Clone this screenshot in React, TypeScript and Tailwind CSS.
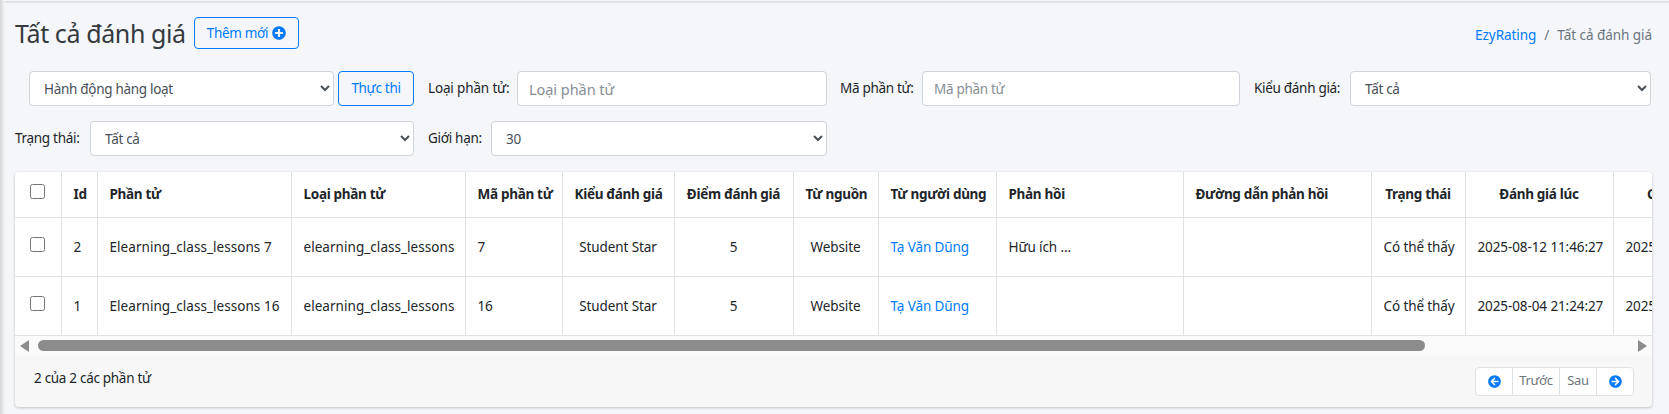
import React from "react";
import { FaPlusCircle, FaArrowCircleLeft, FaArrowCircleRight } from "react-icons/fa";

const cols = [
  { w: "w-[46px]", label: "" },
  { w: "w-[36px]", label: "Id" },
  { w: "w-[194px]", label: "Phần tử" },
  { w: "w-[174px]", label: "Loại phần tử" },
  { w: "w-[97px]", label: "Mã phần tử" },
  { w: "w-[112px]", label: "Kiểu đánh giá", c: true },
  { w: "w-[119px]", label: "Điểm đánh giá", c: true },
  { w: "w-[85px]", label: "Từ nguồn", c: true },
  { w: "w-[118px]", label: "Từ người dùng" },
  { w: "w-[187px]", label: "Phản hồi" },
  { w: "w-[188px]", label: "Đường dẫn phản hồi" },
  { w: "w-[94px]", label: "Trạng thái", c: true },
  { w: "w-[148px]", label: "Đánh giá lúc", c: true },
  { w: "w-[148px]", label: "Cập nhật lúc", c: true },
];

const rows = [
  ["2", "Elearning_class_lessons 7", "elearning_class_lessons", "7", "Student Star", "5", "Website", "Tạ Văn Dũng", "Hữu ích ...", "", "Có thể thấy", "2025-08-12 11:46:27", "2025-08-12 11:46:27"],
  ["1", "Elearning_class_lessons 16", "elearning_class_lessons", "16", "Student Star", "5", "Website", "Tạ Văn Dũng", "", "", "Có thể thấy", "2025-08-04 21:24:27", "2025-08-04 21:24:27"],
];

const field = "h-[35px] rounded-[4px] border border-[#ced4da] bg-white text-[13.5px] text-[#495057]";

export default function App() {
  return (
    <div className="relative h-[414px] w-[1669px] overflow-hidden bg-[#f4f6f9] font-['Noto_Sans',sans-serif] text-[13.5px] tracking-[-0.3px] text-[#212529]">
      <div className="h-[3px] border-b-2 border-[#dee2e6]" />
      <div className="absolute inset-y-0 left-0 w-[5px] bg-gradient-to-r from-[#d4d4d6] to-[#f4f6f9]" />
      <div className="pl-[15px] pr-[17px]">
        <div className="flex h-[68px] items-start justify-between pt-[14px]">
          <div className="flex items-center gap-[8px]">
            <h1 className="text-[25px] leading-[32px] tracking-[-0.4px] text-[#343a40]">Tất cả đánh giá</h1>
            <button className="flex h-[32px] items-center gap-[4px] rounded-[4px] border border-[#007bff] px-[12px] text-[13.5px] text-[#007bff]">
              Thêm mới <FaPlusCircle className="h-[14px] w-[14px]" />
            </button>
          </div>
          <div className="flex items-center gap-[8px] pt-[8px] pr-0 text-[13.5px] tracking-[-0.05px]">
            <span className="text-[#007bff]">EzyRating</span>
            <span className="text-[#6c757d]">/</span>
            <span className="text-[#6c757d]">Tất cả đánh giá</span>
          </div>
        </div>

        <div className="flex h-[35px] items-center pl-[14px]">
          <select className={`${field} w-[305px] pl-[10px]`} defaultValue="a">
            <option value="a">Hành động hàng loạt</option>
          </select>
          <button className="ml-[4px] h-[35px] w-[76px] rounded-[4px] border border-[#007bff] text-[#007bff]">Thực thi</button>
          <label className="ml-[14px] w-[89px] whitespace-nowrap tracking-[-0.15px]">Loại phần tử:</label>
          <input className="h-[35px] w-[310px] rounded-[4px] border border-[#ced4da] bg-white pl-[11px] pr-[12px] text-[14.5px] tracking-[-0.05px] text-[#495057] placeholder:text-[#868e96]" placeholder="Loại phần tử" />
          <label className="ml-[13px] w-[82px] whitespace-nowrap">Mã phần tử:</label>
          <input className={`${field} w-[318px] pl-[11px] pr-[12px] placeholder:text-[#868e96]`} placeholder="Mã phần tử" />
          <label className="ml-[14px] w-[96px] whitespace-nowrap">Kiểu đánh giá:</label>
          <select className={`${field} w-[301px] pl-[10px]`}>
            <option>Tất cả</option>
          </select>
        </div>

        <div className="mt-[15px] flex h-[35px] items-center">
          <label className="w-[75px] whitespace-nowrap">Trạng thái:</label>
          <select className={`${field} w-[324px] pl-[10px]`}>
            <option>Tất cả</option>
          </select>
          <label className="ml-[14px] w-[63px] whitespace-nowrap">Giới hạn:</label>
          <select className={`${field} w-[336px] pl-[10px]`}>
            <option>30</option>
          </select>
        </div>

        <div className="mt-[16px] h-[235px] overflow-hidden rounded-[4px] bg-[#f7f7f7] shadow-[0_0_1px_rgba(0,0,0,0.13),0_1px_3px_rgba(0,0,0,0.2)]">
          <div className="overflow-hidden bg-white">
            <table className="w-[1746px] table-fixed border-collapse">
              <colgroup>
                {cols.map((c, i) => (
                  <col key={i} className={c.w} />
                ))}
              </colgroup>
              <thead>
                <tr className="h-[45px] border-b border-[#dee2e6]">
                  <th className="border-r border-[#dee2e6] pb-[7px] text-center align-middle">
                    <input type="checkbox" className="h-[15px] w-[15px] align-middle" />
                  </th>
                  {cols.slice(1).map((c, i) => (
                    <th key={i} className={`whitespace-nowrap border-r border-[#dee2e6] px-[12px] font-bold ${c.c ? "text-center" : "text-left"}`}>
                      {c.label}
                    </th>
                  ))}
                </tr>
              </thead>
              <tbody>
                {rows.map((r, ri) => (
                  <tr key={ri} className="h-[59px] border-b border-[#dee2e6]">
                    <td className="border-r border-[#dee2e6] pb-[6px] text-center">
                      <input type="checkbox" className="h-[15px] w-[15px] align-middle" />
                    </td>
                    {r.map((v, i) => (
                      <td key={i} className={`whitespace-nowrap border-r border-[#dee2e6] px-[12px] pt-[2px] ${i === 1 || i === 2 ? "tracking-[0.05px]" : "tracking-[-0.1px]"} ${cols[i + 1].c ? "text-center" : ""} ${v === "Tạ Văn Dũng" ? "text-[#007bff]" : ""}`}>
                        {v}
                      </td>
                    ))}
                  </tr>
                ))}
              </tbody>
            </table>
          </div>
          <div className="flex h-[20px] items-center bg-[#fafafa] px-[5px]">
            <svg width="9" height="12" viewBox="0 0 9 12" className="shrink-0"><path d="M9 0v12L0 6z" fill="#8c8c8c" /></svg>
            <div className="ml-[9px] h-[11px] w-[1387px] rounded-full bg-[#8c8c8c]" />
            <div className="flex-1" />
            <svg width="9" height="12" viewBox="0 0 9 12" className="shrink-0"><path d="M0 0v12l9-6z" fill="#8c8c8c" /></svg>
          </div>
          <div className="flex items-start justify-between pl-[19px] pr-[18px] pt-[11px]">
            <span className="pt-[1px]">2 của 2 các phần tử</span>
            <div className="flex h-[29px] items-stretch rounded-[4px] border border-[#dee2e6] bg-white text-[13px] text-[#6c757d]">
              <span className="flex w-[37px] items-center justify-center border-r border-[#dee2e6]"><FaArrowCircleLeft className="h-[13px] w-[13px] text-[#007bff]" /></span>
              <span className="flex w-[47px] items-center justify-center border-r border-[#dee2e6]">Trước</span>
              <span className="flex w-[37px] items-center justify-center border-r border-[#dee2e6]">Sau</span>
              <span className="flex w-[36px] items-center justify-center"><FaArrowCircleRight className="h-[13px] w-[13px] text-[#007bff]" /></span>
            </div>
          </div>
        </div>
      </div>
    </div>
  );
}
